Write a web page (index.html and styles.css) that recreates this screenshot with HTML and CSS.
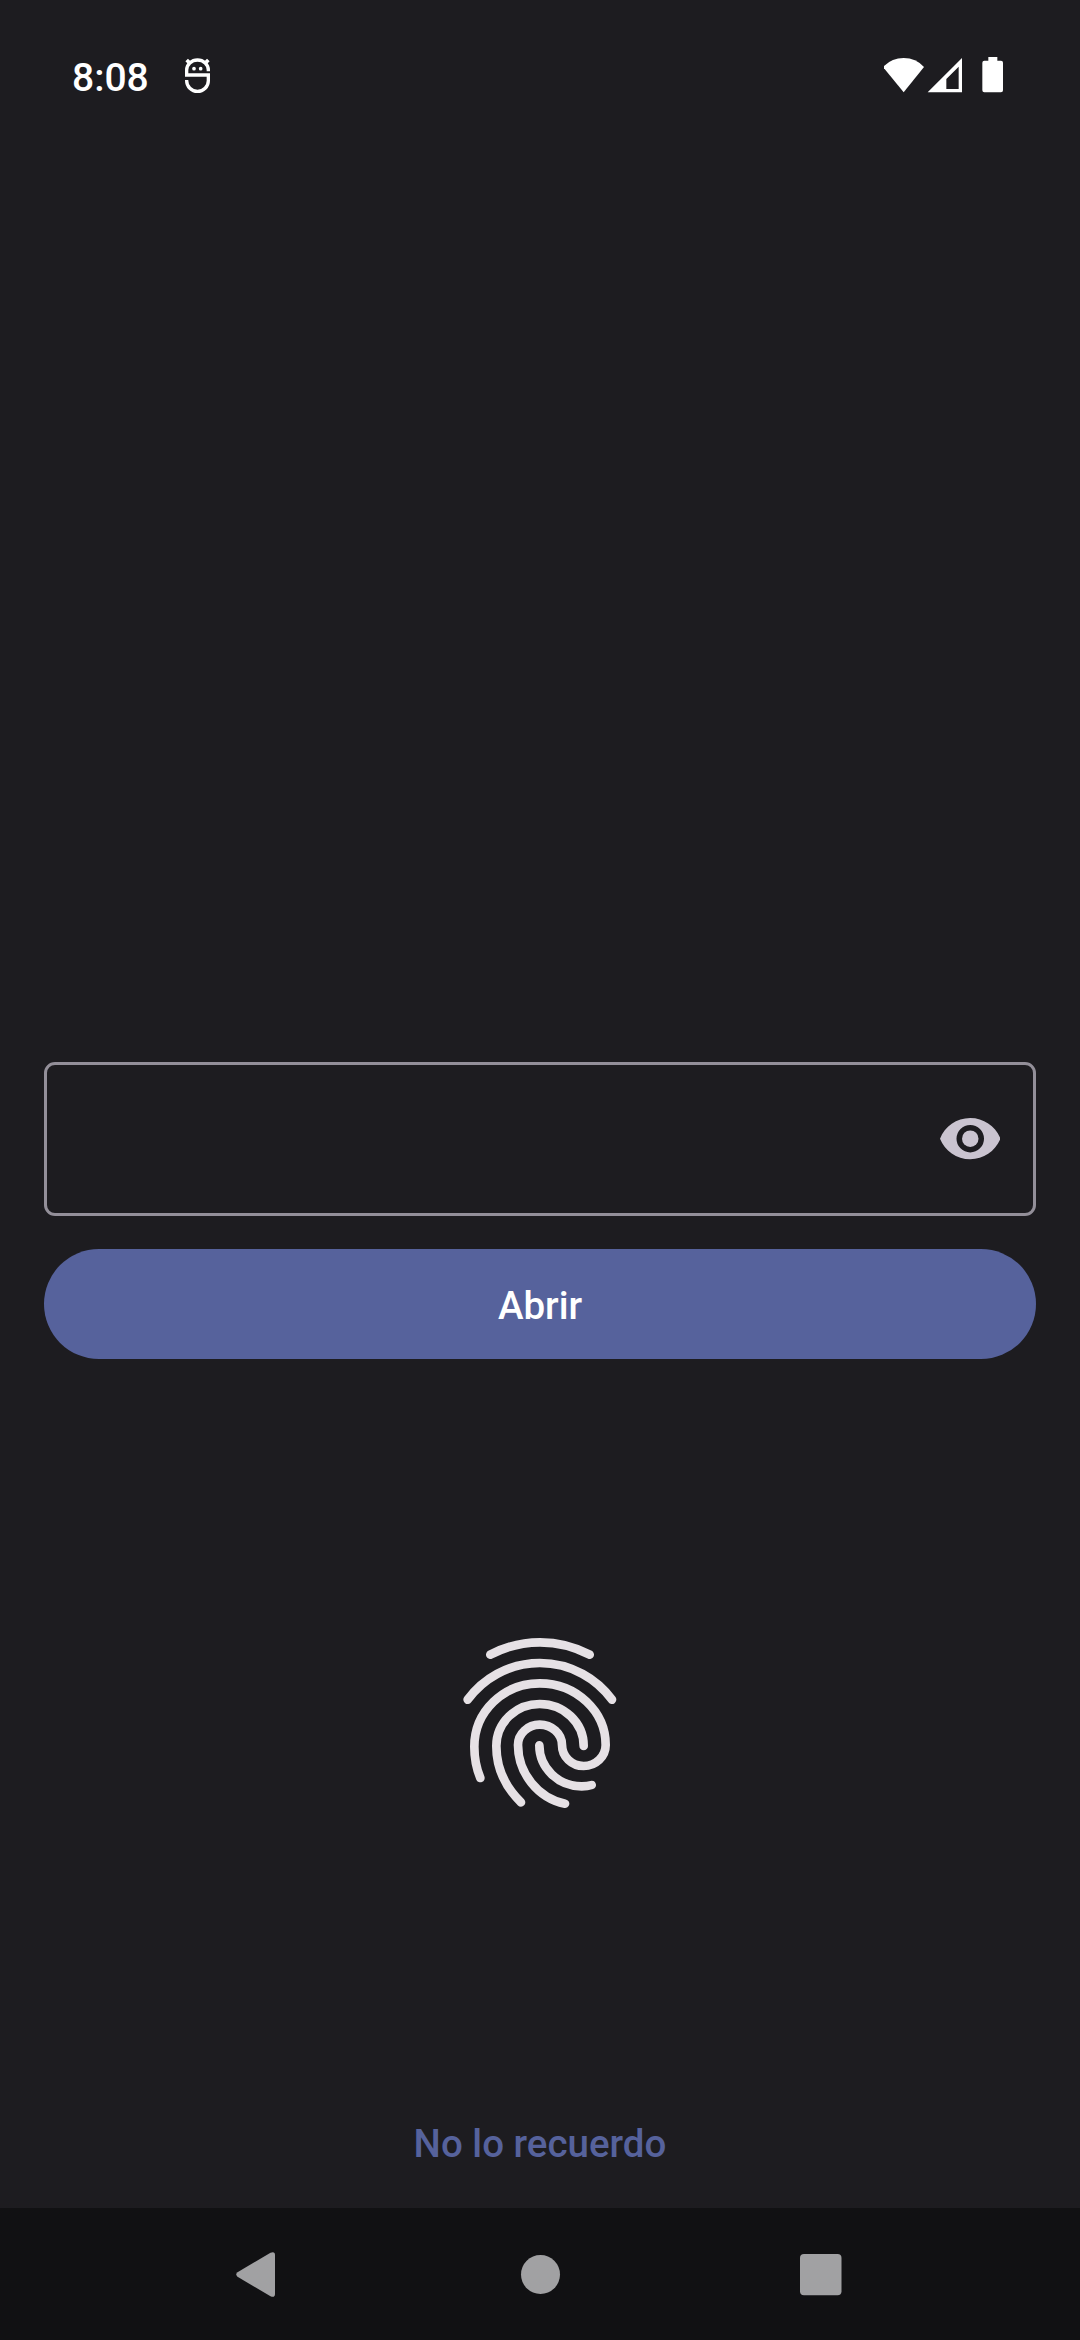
FILE: index.html
```html
<!DOCTYPE html>
<html lang="es">
<head>
<meta charset="utf-8">
<title>Abrir</title>
<link rel="stylesheet" href="styles.css">
</head>
<body>
<div class="screen">
  <header class="status">
    <span class="clock">8:08</span>
    <svg class="debug" viewBox="0 0 90 120" fill="none" stroke="#fff" stroke-width="10">
      <path d="M79 46V42A32.500 30 0 0 0 14 42V57H79V74A32.500 32 0 0 1 14 74V72"/>
      <path d="M14 12L24 22M79 12L69 22" stroke-width="11"/>
      <g fill="#fff" stroke="none"><circle cx="36" cy="38" r="5.500"/><circle cx="56" cy="38" r="5.500"/></g>
    </svg>
    <svg class="indicators" viewBox="5 3 366 120" fill="#fff">
      <path d="M2 36Q27 9 64 9T125 36L64 112Z"/>
      <path fill-rule="evenodd" d="M239 9V112H136ZM229 35L192 72V102H229Z"/>
      <path d="M318 6H345V17H356Q362 17 362 23V106Q362 112 356 112H306Q300 112 300 106V23Q300 17 306 17H318Z"/>
    </svg>
  </header>
  <main class="content">
    <div class="field">
      <input class="password" type="password" aria-label="Contraseña">
      <svg class="eye" viewBox="0 0 22 15" fill="#cac4d0">
        <path fill-rule="evenodd" d="M11 0C6 0 1.73 3.11 0 7.5C1.73 11.89 6 15 11 15S20.27 11.89 22 7.5C20.27 3.11 16 0 11 0ZM11 12.5A5 5 0 1 1 11 2.5A5 5 0 0 1 11 12.5Z"/>
        <circle cx="11" cy="7.5" r="3"/>
      </svg>
    </div>
    <button class="open">Abrir</button>
    <svg class="fingerprint" viewBox="0 0 540 600" fill="none" stroke="#e6e1e5" stroke-width="26" stroke-linecap="round">
      <path d="M121 104A318 318 0 0 1 419 104"/>
      <path d="M53 239A268 268 0 0 1 486 239"/>
      <path d="M91 474C79 445 73 415 73 380C73 275 160 190 269 190C380 190 467 275 467 375C467 410 437 438 401 438C365 438 336 410 336 375C336 341 305 314 269 314C234 314 204 341 204 375C204 460 265 535 345 551"/>
      <path d="M401 378C401 308 342 252 269 252C197 252 139 308 139 378C139 440 165 500 213 547"/>
      <path d="M268 376C268 444 325 499 395 499Q413 499 425 495"/>
    </svg>
    <button class="forgot">No lo recuerdo</button>
  </main>
  <nav class="navbar">
    <svg class="key" viewBox="0 0 132 132" fill="#a1a1a3"><path d="M44.500 64.300L77.500 44.700Q82 43 82 47V86Q82 90 77.500 88.300L44.500 68.700Q42 66.500 44.500 64.300Z"/></svg>
    <svg class="key" viewBox="0 0 132 132" fill="#a1a1a3"><circle cx="66.500" cy="66.500" r="19.500"/></svg>
    <svg class="key" viewBox="0 0 132 132" fill="#a1a1a3"><rect x="45" y="46" width="41.500" height="41.300" rx="4"/></svg>
  </nav>
</div>
</body>
</html>
```
FILE: styles.css
```css
* { box-sizing: border-box; }
body { margin: 0; background: #1d1c20; font-family: Roboto, "Noto Sans", sans-serif; }
button { border: 0; background: none; font-family: inherit; font-weight: 500; padding: 0; }
svg { display: block; flex: none; }
.screen { width: 1080px; height: 2340px; display: flex; flex-direction: column; }
.status { height: 132px; padding: 20px 74px 0 72px; display: flex; align-items: center; color: #fff; }
.clock { width: 110px; padding-top: 3px; font-size: 39px; font-weight: 500; line-height: 46px; }
.debug { width: 30px; height: 40px; }
.indicators { width: 122px; height: 40px; margin-left: auto; }
.content { flex: 1; padding: 930px 44px 0; display: flex; flex-direction: column; align-items: center; }
.field { width: 100%; height: 154px; border: 3px solid #938f99; border-radius: 11px; padding: 0 33px 0 40px; display: flex; align-items: center; }
.password { flex: 1; height: 100%; border: 0; outline: 0; background: transparent; color: #e6e1e5; font-size: 44px; }
.eye { width: 60.500px; height: 41.250px; }
.open { width: 100%; height: 110px; margin-top: 33px; padding-top: 3px; border-radius: 55px; background: #56629c; color: #fff; font-size: 38.5px; }
.fingerprint { width: 180px; height: 200px; margin-top: 261px; }
.forgot { margin-top: 267px; height: 110px; padding-top: 3px; color: #56629c; font-size: 38.5px; }
.navbar { height: 132px; padding: 0 193px; background: #111113; display: flex; justify-content: space-between; }
.key { width: 132px; height: 132px; }
```
